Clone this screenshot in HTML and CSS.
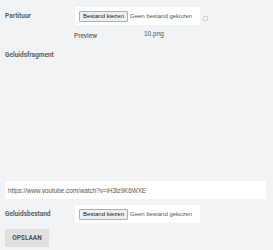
FILE: index.html
```html
<!DOCTYPE html>
<html lang="nl">
<head>
    <meta charset="UTF-8">
    <meta name="viewport" content="width=device-width, initial-scale=1.0">
    <title>Partituur bewerken</title>
    <link rel="stylesheet" href="styles.css">
</head>
<body>
    <form class="form" onsubmit="return false">
        <div class="row">
            <label class="label">Partituur</label>
            <div class="file-box">
                <button type="button" class="file-btn">Bestand kiezen</button>
                <span class="file-text">Geen bestand gekozen</span>
            </div>
            <span class="check"></span>
        </div>
        <div class="preview-row">
            <span class="preview-label">Preview</span>
            <span class="preview-file">10.png</span>
        </div>
        <div class="row fragment-row">
            <label class="label">Geluidsfragment</label>
        </div>
        <div class="player"></div>
        <input type="text" class="url-input" value="https://www.youtube.com/watch?v=lH3lz9K6WXE">
        <div class="row sound-row">
            <label class="label">Geluidsbestand</label>
            <div class="file-box">
                <button type="button" class="file-btn">Bestand kiezen</button>
                <span class="file-text">Geen bestand gekozen</span>
            </div>
        </div>
        <button type="submit" class="save-btn">OPSLAAN</button>
    </form>
</body>
</html>
```

FILE: styles.css
```css
body {
    margin: 0;
    background-color: #f2f3f5;
    font-family: Roboto, 'Liberation Sans', sans-serif;
    font-size: 6.5px;
    color: #555;
}
.form {
    padding: 7px 5px 0;
}
.row {
    display: flex;
    align-items: center;
}
.label {
    width: 70px;
    flex-shrink: 0;
    font-weight: bold;
    color: #5f5f5f;
    white-space: nowrap;
}
.file-box {
    display: flex;
    align-items: center;
    gap: 2px;
    width: 121px;
    height: 18px;
    padding-left: 4px;
    background: #fff;
    white-space: nowrap;
}
.file-btn {
    flex-shrink: 0;
    font-family: 'Liberation Sans', sans-serif;
    font-size: 6px;
    color: #222;
    background: #efefef;
    border: 1px solid #b0b0b0;
    border-radius: 1px;
    height: 11px;
    padding: 0 3px;
    margin: 0;
    white-space: nowrap;
}
.file-text {
    font-family: 'Liberation Sans', sans-serif;
    font-size: 6px;
    color: #555;
}
.check {
    width: 3px;
    height: 3px;
    margin: 5px 0 0 3px;
    border: 1px solid #cfcfcf;
    border-radius: 1px;
    background: #f7f7f7;
}
.preview-row {
    display: flex;
    height: 10px;
    margin-top: 5px;
    padding-left: 69px;
}
.preview-label {
    width: 70px;
    align-self: flex-end;
    font-weight: 500;
    color: #666;
}
.preview-file {
    font-family: 'Liberation Sans', sans-serif;
    color: #555;
}
.fragment-row {
    height: 10px;
    margin-top: 10px;
}
.player {
    height: 121px;
}
.url-input {
    display: block;
    box-sizing: border-box;
    width: 261px;
    height: 18px;
    margin: 0;
    padding: 0 3px;
    border: none;
    background: #fff;
    font-family: 'Liberation Sans', sans-serif;
    font-size: 6.3px;
    color: #555;
}
.sound-row {
    margin-top: 6px;
}
.save-btn {
    display: block;
    width: 44px;
    height: 18px;
    margin-top: 6px;
    padding: 0;
    border: none;
    border-radius: 1px;
    background: #e0e0e0;
    font-family: Roboto, 'Liberation Sans', sans-serif;
    font-size: 6.5px;
    font-weight: bold;
    color: #555;
    cursor: pointer;
}
```
